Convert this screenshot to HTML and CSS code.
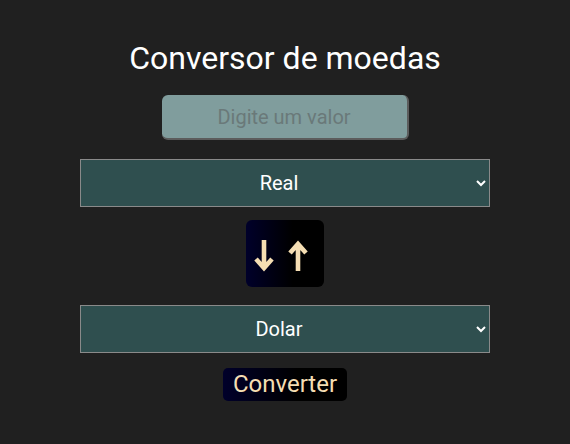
FILE: index.html
```html
<!DOCTYPE html>
<html lang="pt">
<head>
<meta charset="utf-8">
<link rel="stylesheet" href="styles.css">
</head>
<body>
<main class="app">
  <h1 class="title">Conversor de moedas</h1>
  <input class="valor" type="text" placeholder="Digite um valor">
  <select class="moeda">
    <option>Real</option>
  </select>
  <button class="swap" type="button" aria-label="Inverter moedas">
    <svg class="swap-icon" viewBox="0 0 78 67" width="78" height="67" aria-hidden="true">
      <path d="M18 20 V48 M10 39 L18 48 L26 39" fill="none" stroke="#f5deb3" stroke-width="4.6" stroke-linejoin="miter" stroke-miterlimit="6" stroke-linecap="butt"/>
      <path d="M52 24 V51 M44 33 L52 24 L60 33" fill="none" stroke="#f5deb3" stroke-width="4.6" stroke-linejoin="miter" stroke-miterlimit="6" stroke-linecap="butt"/>
    </svg>
  </button>
  <select class="moeda">
    <option>Dolar</option>
  </select>
  <button class="converter" type="button">Converter</button>
</main>
</body>
</html>
```

FILE: styles.css
```css
html, body {
  margin: 0;
  padding: 0;
  background: #202020;
  height: 100%;
}
body {
  font-family: Roboto, "Liberation Sans", sans-serif;
}
.app {
  display: flex;
  flex-direction: column;
  align-items: center;
  padding-top: 38px;
}
.title {
  margin: 0;
  font-size: 32px;
  font-weight: 400;
  color: #ffffff;
  line-height: 40px;
}
.valor {
  margin-top: 17px;
  box-sizing: border-box;
  width: 247px;
  height: 45px;
  background: #809d9d;
  border: none;
  border-right: 2px solid #5c5c5c;
  border-bottom: 2px solid #5c5c5c;
  border-radius: 6px;
  font-family: Roboto, "Liberation Sans", sans-serif;
  font-size: 20px;
  text-align: center;
  color: #333;
  outline: none;
}
.valor::placeholder {
  color: #6a7979;
}
.moeda {
  box-sizing: border-box;
  width: 410px;
  height: 48px;
  background: #2f4f4f;
  border: 1px solid #8a8a8a;
  border-radius: 0;
  color: #ffffff;
  font-family: Roboto, "Liberation Sans", sans-serif;
  font-size: 20px;
  text-align: center;
  margin-top: 19px;
}
.swap {
  margin-top: 13px;
  width: 78px;
  height: 67px;
  border: none;
  border-radius: 6px;
  background: linear-gradient(to right, #00002a, #000000 60%);
  padding: 0;
  display: block;
}
.swap-icon {
  display: block;
}
.swap + .moeda {
  margin-top: 18px;
}
.converter {
  margin-top: 15px;
  height: 33px;
  padding: 0 10px;
  border: none;
  border-radius: 5px;
  background: linear-gradient(to right, #00002a, #000000 60%);
  color: #f5deb3;
  font-family: Roboto, "Liberation Sans", sans-serif;
  font-size: 24px;
  line-height: 33px;
}
```
